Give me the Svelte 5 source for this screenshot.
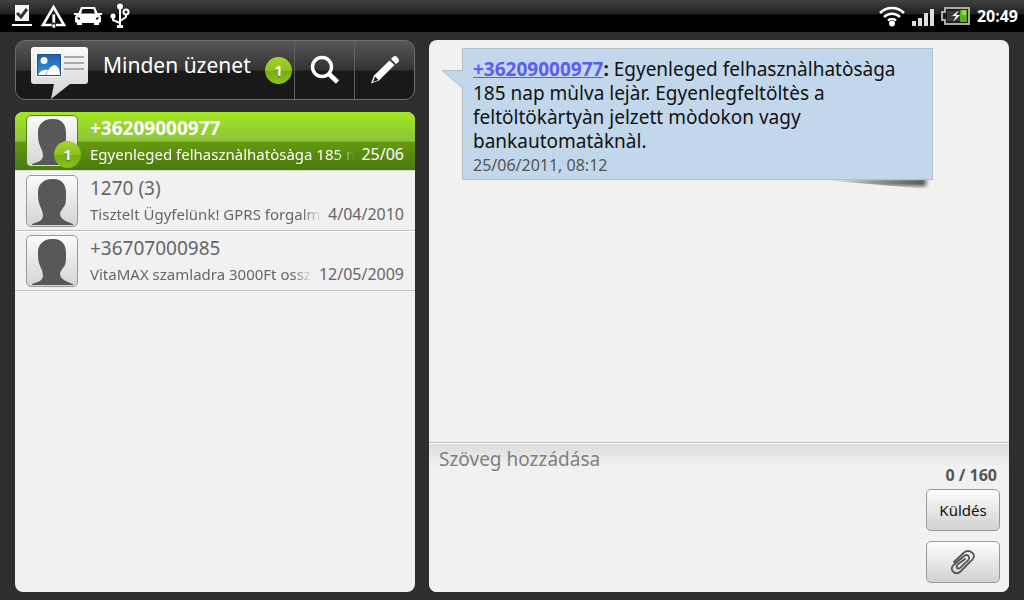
<script>
    let selected = $state(0);
    let draft = $state("");

    const threads = [
        { name: "+36209000977", preview: "Egyenleged felhasznàlhatòsàga 185 n", date: "25/06", unread: 1 },
        { name: "1270 (3)", preview: "Tisztelt Ügyfelünk! GPRS forgalma", date: "4/04/2010", unread: 0 },
        { name: "+36707000985", preview: "VitaMAX szamladra 3000Ft ossz", date: "12/05/2009", unread: 0 },
    ];
</script>

<div class="screen">
    <header class="status">
        <div class="status-icons">
            <svg width="20" height="22" viewBox="0 0 20 22" aria-hidden="true">
                <path d="M3 0h14v16H3z" fill="#f4f4f4" />
                <path d="M5 8l4 4 6-8" fill="none" stroke="#333" stroke-width="3" />
                <path d="M0 19h20v2H0z" fill="#fff" />
            </svg>
            <svg width="26" height="25" viewBox="0 0 26 25" aria-hidden="true">
                <path d="M13.500 3L24 21H3z" fill="none" stroke="#fff" stroke-width="2.600" />
                <path d="M12 10h3.500v9H12zM12 20h3.500v4H12z" fill="#fff" stroke="#222" stroke-width=".8" />
            </svg>
            <svg width="28" height="22" viewBox="0 0 28 22" aria-hidden="true">
                <path d="M7 2h14l2.500 6H28v2h-2l1 2v5l-2 1v2h-5v-2H8v2H3v-2l-2-1v-5l1-2H0V8h4.500z" fill="#fff" />
                <path d="M8.500 4h11l1.500 4.500H7z" fill="#111" />
                <path d="M3 12l3 1v1.500H4zM25 12l-3 1v1.500h2z" fill="#111" />
            </svg>
            <svg width="20" height="26" viewBox="0 0 20 26" fill="none" stroke="#fff" stroke-width="2" aria-hidden="true">
                <path d="M10 4v20M10 20L3 17v-4M10 18l6-4V9" />
                <circle cx="10" cy="3.500" r="3" fill="#fff" stroke="none" />
                <circle cx="3" cy="13" r="2.600" fill="#fff" stroke="none" />
                <circle cx="16" cy="9" r="2.500" fill="#222" />
                <path d="M7 23.500h6" stroke-width="3" />
            </svg>
        </div>
        <div class="status-icons system">
            <svg width="26" height="22" viewBox="0 0 26 22" fill="none" stroke="#fff" stroke-width="2.600" aria-hidden="true">
                <path d="M1 8a17 17 0 0 1 24 0M5 12a11.500 11.500 0 0 1 16 0M9 15.500a6 6 0 0 1 8 0" />
                <circle cx="13" cy="18.500" r="3" fill="#fff" stroke="none" />
            </svg>
            <svg width="24" height="20" viewBox="0 0 24 20" fill="#ddd" aria-hidden="true">
                <path d="M1 15h4v5H1zM7 12h4v8H7zM13 7h4v13h-4zM19 3h4v17h-4z" />
            </svg>
            <svg width="30" height="18" viewBox="0 0 30 18" aria-hidden="true">
                <path d="M4 1h24v16H4v-4H1V5h3z" fill="#1d1d1d" stroke="#aaa" stroke-width="2" />
                <path d="M6 4h20v10H6z" fill="#3b3b3b" />
                <path d="M19 3h7v12h-7z" fill="#5cb01c" />
                <path d="M21 3h4v5h-4z" fill="#91d552" />
                <path d="M18 3l-7 6h4l-3 6 7-7h-4z" fill="#fff" />
            </svg>
            <time class="clock">20:49</time>
        </div>
    </header>

    <main class="panes">
        <section class="left">
            <div class="toolbar">
                <button class="filter">
                    <svg class="logo" width="62" height="56" viewBox="0 0 62 56" aria-hidden="true">
                        <defs>
                            <linearGradient id="paper" x2="0" y2="1">
                                <stop offset="0" stop-color="#fafafa" />
                                <stop offset="1" stop-color="#d2d2d2" />
                            </linearGradient>
                            <linearGradient id="sky" x2="0" y2="1">
                                <stop offset="0" stop-color="#1d5fb0" />
                                <stop offset="1" stop-color="#3a98e0" />
                            </linearGradient>
                        </defs>
                        <path d="M6 4h51q3 0 3 3v31q0 3-3 3H42L23 56l3-15H6q-3 0-3-3V7q0-3 3-3z" fill="url(#paper)" />
                        <path d="M8 10h26v24H8z" fill="#fff" />
                        <path d="M9.500 11.500h23v21h-23z" fill="url(#sky)" stroke="#1a4c96" stroke-width="1" />
                        <circle cx="16" cy="17.500" r="3.500" fill="#fff" />
                        <path d="M10 32q3-6 10-5l-3 5zM18 32q3-9 9-10 5 2 5 10z" fill="#fff" />
                        <path d="M36 14h20M36 20h20M36 26h20" stroke="#aaa" stroke-width="2" />
                    </svg>
                    <span class="filter-name">Minden üzenet</span>
                    <span class="badge">1</span>
                </button>
                <button class="tool" aria-label="Keresés">
                    <svg width="32" height="32" viewBox="0 0 32 32" fill="none" stroke="#fff" aria-hidden="true">
                        <circle cx="13" cy="13" r="9.500" stroke-width="3.400" />
                        <path d="M20 20l8.500 8" stroke-width="4.600" />
                    </svg>
                </button>
                <button class="tool" aria-label="Új üzenet">
                    <svg width="32" height="32" viewBox="0 0 32 32" aria-hidden="true">
                        <path d="M20.500 6.500l5 4.500L10 26.500l-8 3 3-8z" fill="#fff" />
                        <path d="M6 22.500l3.500 3.500-5.500 2z" fill="#222" />
                        <path d="M22 5l2-2q2-2 4.500.5t1 4.500l-2.500 2z" fill="#fff" />
                    </svg>
                </button>
            </div>

            <div class="threads">
                {#each threads as thread, i}
                    <button class="thread" class:selected={selected === i} onclick={() => (selected = i)}>
                        <span class="avatar">
                            <svg width="48" height="48" viewBox="0 0 48 48" aria-hidden="true">
                                <path
                                    d="M24 2c9-1 14 5 14 13v6c0 5-1 8-3 10-1 2-3 3-3 6 0 5 7 8 13 10v1H4v-1c6-2 11-3 11-9 0-4-3-8-4-12-1-3-1-7-1-11C10 8 15 2 24 2z"
                                    fill="#58585a"
                                />
                            </svg>
                            {#if thread.unread}
                                <span class="badge over">{thread.unread}</span>
                            {/if}
                        </span>
                        <span class="summary">
                            <span class="name">{thread.name}</span>
                            <span class="line">
                                <span class="preview">{thread.preview}</span>
                                <span class="date">{thread.date}</span>
                            </span>
                        </span>
                    </button>
                {/each}
            </div>
        </section>

        <section class="right">
            <div class="conversation">
                <article class="bubble">
                    <svg class="tail" width="23" height="20" viewBox="0 0 23 20" aria-hidden="true">
                        <path d="M23 1H2L22 18.500h1z" fill="#c3d7ec" />
                        <path d="M22 .500H1L22 18.500" fill="none" stroke="#b4bfc9" />
                    </svg>
                    <p><a href="tel:+36209000977">+36209000977</a><b>:</b> Egyenleged felhasznàlhatòsàga 185 nap mùlva lejàr. Egyenlegfeltöltès a feltöltökàrtyàn jelzett mòdokon vagy bankautomatàknàl.</p>
                    <time>25/06/2011, 08:12</time>
                </article>
            </div>

            <form class="composer" onsubmit={(e) => e.preventDefault()}>
                <textarea placeholder="Szöveg hozzádása" aria-label="Szöveg hozzádása" bind:value={draft}></textarea>
                <div class="side">
                    <span class="counter">{draft.length} / 160</span>
                    <div class="actions">
                        <button class="action" type="submit">Küldés</button>
                        <button class="action" type="button" aria-label="Csatolás">
                            <svg width="26" height="26" viewBox="0 0 26 26" fill="none" stroke="#555" stroke-width="1.800" stroke-linecap="round" aria-hidden="true">
                                <path d="M4 13L14 3.500q4-3 8 0t0 7.500L11 22q-4 4-7.500 1t0-7L14 7q3-2 4.500 0t-.5 4.500l-8 7.500q-2 1-3 0t.5-3.500L15 10" />
                            </svg>
                        </button>
                    </div>
                </div>
            </form>
        </section>
    </main>
</div>

<style>
    :global(body) {
        margin: 0;
        background: #2e2e2e;
    }

    .screen {
        display: flex;
        flex-direction: column;
        min-height: 100vh;
        font-family: "Noto Sans", "Open Sans", sans-serif;
        background: #2e2e2e;
    }

    button,
    textarea {
        font-family: inherit;
        margin: 0;
    }

    .status {
        display: flex;
        justify-content: space-between;
        align-items: center;
        height: 32px;
        padding: 0 6px 0 12px;
        color: #fff;
        background: linear-gradient(#414141 0, #202020 14px, #000 15px, #000 100%);
    }

    .status-icons {
        display: flex;
        align-items: center;
        gap: 8px;
    }

    .status-icons.system {
        gap: 6px;
    }

    .clock {
        font-size: 16px;
        font-weight: 700;
    }

    .panes {
        flex: 1;
        display: grid;
        grid-template-columns: 20fr 29fr;
        gap: 14px;
        padding: 8px 15px;
    }

    .left {
        display: flex;
        flex-direction: column;
        gap: 12px;
        min-width: 0;
    }

    .toolbar {
        display: flex;
        height: 60px;
        box-sizing: border-box;
        border: 1px solid #6e6e6e;
        border-radius: 10px;
        background: linear-gradient(#565656 0, #333 29px, #191919 30px, #191919 100%);
        overflow: hidden;
    }

    .filter,
    .tool {
        display: flex;
        align-items: center;
        padding: 0;
        border: 0;
        color: #fff;
        background: transparent;
        cursor: pointer;
    }

    .filter {
        flex: 1;
        padding: 0 2px 0 12px;
    }

    .logo {
        align-self: flex-end;
    }

    .filter-name {
        flex: 1;
        padding: 0 0 10px 13px;
        font-size: 21px;
        line-height: 28px;
        text-align: left;
        white-space: nowrap;
    }

    .tool {
        width: 60px;
        justify-content: center;
        border-left: 1px solid #606060;
    }

    .badge {
        width: 27px;
        height: 27px;
        border-radius: 50%;
        color: #fff;
        font-size: 15px;
        font-weight: 700;
        line-height: 26px;
        text-align: center;
        text-shadow: 0 1px 1px #4a7010;
        background: linear-gradient(#a6d32c, #8dc01c 50%, #76ab10 51%, #8cc41c);
    }

    .badge.over {
        position: absolute;
        right: -4px;
        bottom: -2px;
    }

    .threads {
        flex: 1;
        border-radius: 8px;
        background: #f1f1f1;
        overflow: hidden;
    }

    .thread {
        display: flex;
        gap: 12px;
        width: 100%;
        padding: 4px 11px 3px 11px;
        border: 0;
        border-bottom: 1px solid #c2c2c2;
        color: #666;
        text-align: left;
        background: transparent;
        box-shadow: inset 0 1px #fff;
        cursor: pointer;
    }

    .thread.selected {
        padding-top: 3px;
        color: #fff;
        border-bottom-color: #d5e0c5;
        background: linear-gradient(#a2e823 0, #8cc43a 29px, #66990f 30px, #497a10 100%);
        box-shadow: none;
    }

    .avatar {
        position: relative;
        flex: none;
        display: grid;
        place-items: center;
        width: 52px;
        height: 52px;
        box-sizing: border-box;
        border: 1px solid #999;
        border-radius: 5px;
        background: linear-gradient(#fbfbfb, #d4d4d4);
    }

    .selected .avatar {
        border-color: #55850f;
    }

    .summary {
        flex: 1;
        min-width: 0;
    }

    .name {
        display: block;
        font-size: 19px;
        line-height: 27px;
    }

    .selected .name {
        font-weight: 700;
    }

    .line {
        display: flex;
        gap: 6px;
        font-size: 16px;
        line-height: 24px;
        white-space: nowrap;
    }

    .preview {
        flex: 1;
        font-size: 15px;
        overflow: hidden;
        mask-image: linear-gradient(to left, transparent, #000 20px);
    }

    .right {
        display: flex;
        flex-direction: column;
        min-width: 0;
        border-radius: 8px;
        background: #f1f1f1;
        overflow: hidden;
    }

    .conversation {
        flex: 1;
        padding: 8px 76px 8px 33px;
    }

    .bubble {
        position: relative;
        padding: 8px 10px 2px;
        border: 1px solid #b4bfc9;
        color: #111;
        background: #c3d7ec;
    }

    .bubble::after {
        content: "";
        position: absolute;
        z-index: -1;
        right: 6px;
        top: 100%;
        width: 104px;
        height: 7px;
        background: linear-gradient(to left, #444, #777 40%, transparent);
        border-radius: 0 0 8px 100px;
        filter: blur(2px);
        clip-path: polygon(0 1px, 110% 1px, 110% 150%, 90% 130%);
    }

    .right {
        isolation: isolate;
    }

    .tail {
        position: absolute;
        left: -22px;
        top: 21px;
    }

    .bubble p {
        margin: 0;
        font-size: 19px;
        line-height: 24px;
    }

    .bubble a {
        color: #5c5cf0;
        font-weight: 700;
    }

    .bubble time {
        display: block;
        color: #555;
        font-size: 16px;
        line-height: 24px;
    }

    .composer {
        display: flex;
        border-top: 1px solid #bbb;
        background: linear-gradient(#dcdcdc, #f1f1f1 24px);
        box-shadow: inset 0 1px #fff;
    }

    textarea {
        flex: 1;
        min-width: 0;
        padding: 4px 10px;
        border: 0;
        outline: 0;
        resize: none;
        color: #222;
        font-size: 19px;
        line-height: 24px;
        background: transparent;
    }

    textarea::placeholder {
        color: #808080;
        opacity: 1;
    }

    .side {
        display: flex;
        flex-direction: column;
        gap: 6px;
        padding: 24px 9px 9px;
    }

    .actions {
        display: flex;
        flex-direction: column;
        gap: 10px;
    }

    .counter {
        padding-right: 3px;
        color: #555;
        font-size: 16px;
        font-weight: 700;
        line-height: 16px;
        text-align: right;
    }

    .action {
        display: grid;
        place-items: center;
        width: 74px;
        height: 42px;
        padding: 0;
        border: 1px solid #999;
        border-radius: 5px;
        color: #111;
        font-size: 15px;
        background: linear-gradient(#fdfdfd, #d2d2d2);
        cursor: pointer;
    }
</style>
